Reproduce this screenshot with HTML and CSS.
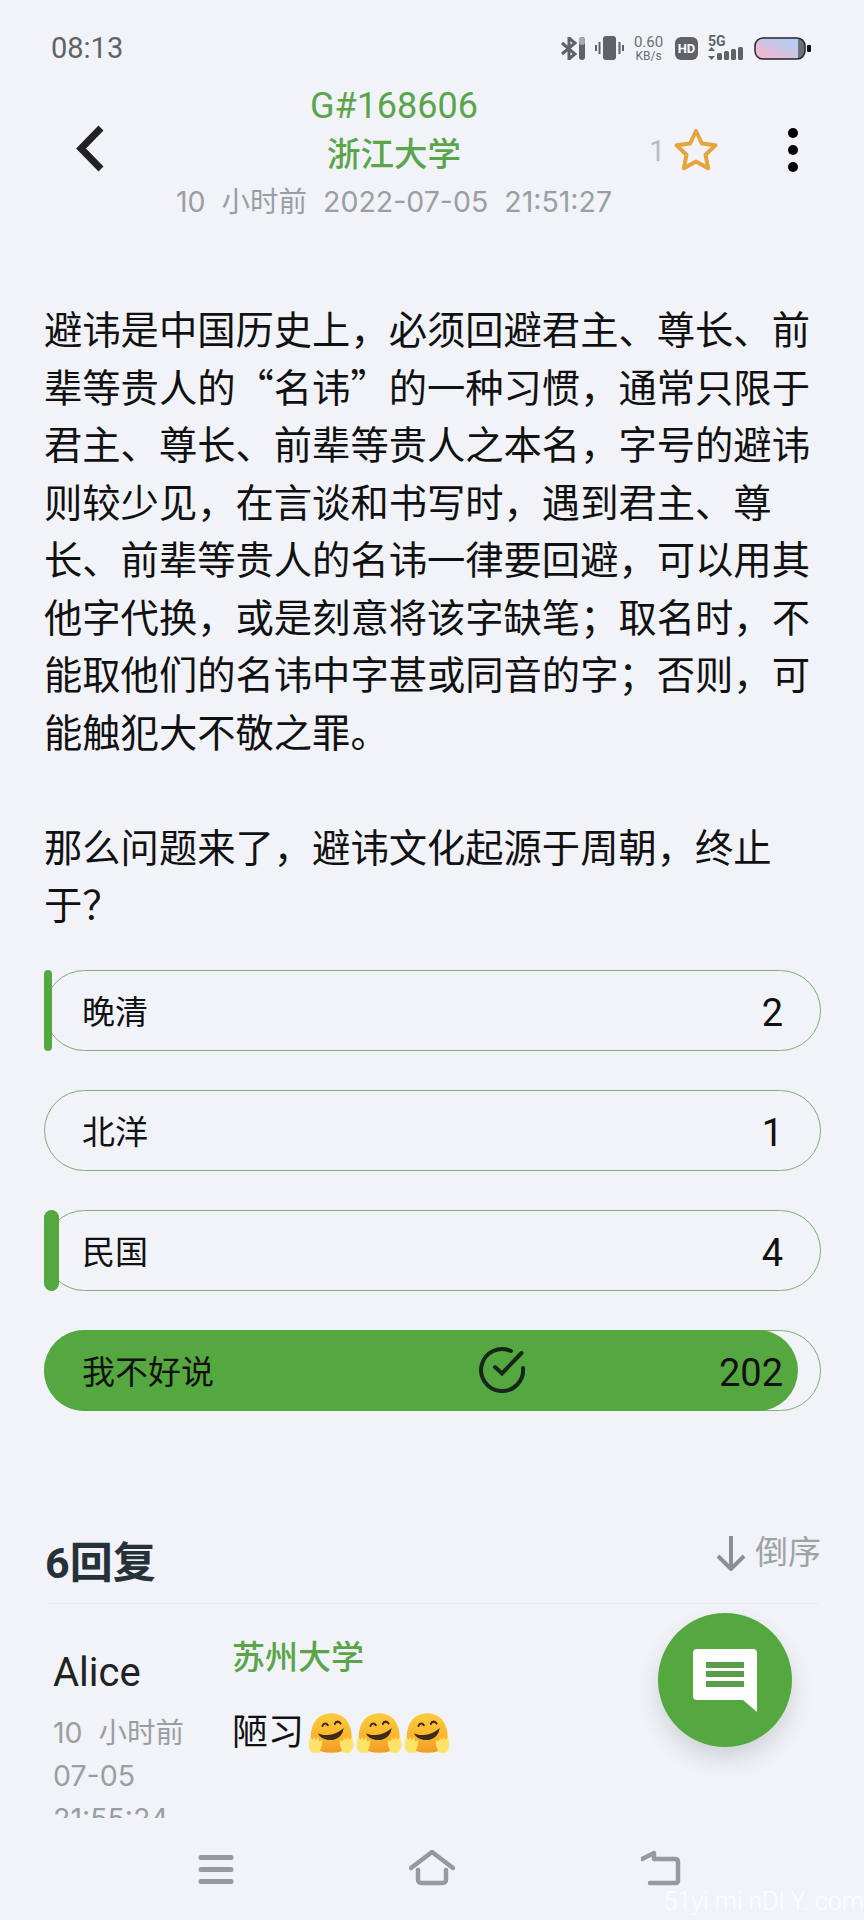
FILE: index.html
```html
<!DOCTYPE html>
<html lang="zh-CN">
<head>
  <meta charset="UTF-8" />
  <meta name="viewport" content="width=device-width, initial-scale=1.0" />
  <title>G#168606</title>
  <link rel="stylesheet" href="styles.css">
</head>
<body>
  <svg class="defs" width="0" height="0">
    <defs>
      <linearGradient id="hug-body" x1="0" y1="0" x2="0" y2="1">
        <stop offset="0" stop-color="#fccb3c" />
        <stop offset="0.6" stop-color="#f9b52e" />
        <stop offset="1" stop-color="#f29a25" />
      </linearGradient>
      <linearGradient id="batt" x1="0" y1="1" x2="1" y2="0">
        <stop offset="0.1" stop-color="#f6b6cf" />
        <stop offset="0.75" stop-color="#b4cdf0" />
      </linearGradient>
      <symbol id="hug" viewBox="0 0 137 118">
        <path d="M8 72C8 28 32 0 69 0s61 28 61 72c0 26-14 46-61 46S8 98 8 72z" fill="url(#hug-body)" />
        <path d="M43 38c3-9 12-10 16-2M80 32c3-9 13-9 17-1" fill="none" stroke="#3d2a14" stroke-width="6" stroke-linecap="round" />
        <path d="M30 60c18 10 52 6 76-16-2 24-22 38-44 36-14-1-28-8-32-20z" fill="#3d2a14" />
        <path d="M2 86l6-14 6 8 4-10 6 10 6-8 4 12 8-4 0 14-8 24H12C4 112 0 98 2 86z" fill="#fde36a" />
        <path d="M135 86l-6-14-6 8-4-10-6 10-6-8-4 12-8-4 0 14 8 24h22c8-6 12-20 10-32z" fill="#fde36a" />
      </symbol>
    </defs>
  </svg>

  <div class="status">
    <span class="clock">08:13</span>
    <div class="status-icons">
      <svg width="25" height="23" viewBox="0 0 25 23">
        <path d="M2 6l13 11-6 5V1l6 5L2 17" fill="none" stroke="#5f6368" stroke-width="3" />
        <rect x="19" y="0" width="6" height="23" rx="3" fill="#5f6368" />
        <rect x="19" y="0" width="6" height="8" rx="3" fill="#a9abae" />
      </svg>
      <svg width="29" height="24" viewBox="0 0 29 24">
        <rect x="8" y="0" width="13" height="24" rx="3" fill="#5f6368" />
        <path d="M4.500 6v12M24.500 6v12M1 9v6M28 9v6" stroke="#5f6368" stroke-width="2" />
      </svg>
      <div class="speed"><span>0.60</span><span class="speed-unit">KB/s</span></div>
      <div class="hd">HD</div>
      <div class="net">
        <span>5G</span>
        <svg width="35" height="13" viewBox="0 0 35 13">
          <path d="M0 4L3.500 0 7 4zM0 9h7l-3.500 4z" fill="#5f6368" />
          <rect x="9" y="6" width="5" height="7" rx="1.500" fill="#5f6368" />
          <rect x="16" y="4" width="5" height="9" rx="1.500" fill="#5f6368" />
          <rect x="23" y="2" width="5" height="11" rx="1.500" fill="#5f6368" />
          <rect x="30" y="0" width="5" height="13" rx="1.500" fill="#5f6368" />
        </svg>
      </div>
      <svg width="57" height="23" viewBox="0 0 57 23">
        <rect x="1" y="1" width="50" height="21" rx="8" fill="url(#batt)" />
        <path d="M45 1h-1v21h1c4 0 6-5 6-10.500S49 1 45 1z" fill="#6d7078" />
        <rect x="1" y="1" width="50" height="21" rx="8" fill="none" stroke="#23232b" stroke-width="1.500" />
        <rect x="53" y="8" width="4" height="7" rx="1" fill="#111" />
      </svg>
    </div>
  </div>

  <header class="topbar">
    <div class="back">
      <svg width="30" height="47" viewBox="0 0 30 47">
        <path d="M26 3L6 23.500 26 44" fill="none" stroke="#222" stroke-width="7" />
      </svg>
    </div>
    <div class="title">
      <div class="title-id">G#168606</div>
      <div class="title-school">浙江大学</div>
      <div class="title-time">10  小时前  2022-07-05  21:51:27</div>
    </div>
    <div class="actions">
      <span class="star-count">1</span>
      <svg class="star" width="44" height="44" viewBox="0 0 44 44">
        <path d="M22 3l5.900 12.500 13.600 1.800-10 9.400 2.600 13.500L22 33.600 9.900 40.200l2.600-13.500-10-9.400 13.600-1.800z" fill="none" stroke="#e6a43c" stroke-width="4" stroke-linejoin="round" />
      </svg>
      <div class="dots"><i></i><i></i><i></i></div>
    </div>
  </header>

  <main class="content">
    <div class="post">
      <p>避讳是中国历史上，必须回避君主、尊长、前辈等贵人的“名讳”的一种习惯，通常只限于君主、尊长、前辈等贵人之本名，字号的避讳则较少见，在言谈和书写时，遇到君主、尊长、前辈等贵人的名讳一律要回避，可以用其他字代换，或是刻意将该字缺笔；取名时，不能取他们的名讳中字甚或同音的字；否则，可能触犯大不敬之罪。</p>
      <p>那么问题来了，避讳文化起源于周朝，终止于？</p>
    </div>

    <div class="poll">
      <div class="option">
        <div class="option-fill" style="width: 1%"></div>
        <span class="option-label">晚清</span>
        <span class="option-count">2</span>
      </div>
      <div class="option">
        <span class="option-label">北洋</span>
        <span class="option-count">1</span>
      </div>
      <div class="option">
        <div class="option-fill" style="width: 1.9%"></div>
        <span class="option-label">民国</span>
        <span class="option-count">4</span>
      </div>
      <div class="option">
        <div class="option-fill" style="width: 97.3%"></div>
        <span class="option-label">我不好说</span>
        <svg class="option-check" width="48" height="48" viewBox="0 0 48 48">
          <path d="M33 5A21 21 0 1 0 45 22" fill="none" stroke="#16261a" stroke-width="4" stroke-linecap="round" />
          <path d="M17 21l7 6.500L43.500 7" fill="none" stroke="#16261a" stroke-width="4" stroke-linecap="round" />
        </svg>
        <span class="option-count">202</span>
      </div>
    </div>

    <div class="replies-head">
      <h2>6回复</h2>
      <div class="sort">
        <svg width="32" height="36" viewBox="0 0 32 36">
          <path d="M16 1v33M3 21l13 13 13-13" fill="none" stroke="#8b8f93" stroke-width="4" />
        </svg>
        <span>倒序</span>
      </div>
    </div>
    <div class="divider"></div>

    <div class="reply">
      <div class="reply-author">
        <div class="reply-name">Alice</div>
        <div class="reply-time">10  小时前</div>
        <div class="reply-time">07-05</div>
        <div class="reply-time">21:55:24</div>
      </div>
      <div class="reply-body">
        <div class="reply-school">苏州大学</div>
        <div class="reply-text">
          <span>陋习</span>
          <svg width="46" height="40"><use href="#hug" /></svg>
          <svg width="46" height="40"><use href="#hug" /></svg>
          <svg width="46" height="40"><use href="#hug" /></svg>
        </div>
      </div>
    </div>
  </main>

  <nav class="navbar">
    <svg width="36" height="36" viewBox="0 0 36 36">
      <path d="M3 7.500h30M3 19.500h30M3 31.500h30" stroke="#96999e" stroke-width="5" stroke-linecap="round" />
    </svg>
    <svg width="46" height="36" viewBox="0 0 46 36">
      <path d="M2 18L23 2l21 16" fill="none" stroke="#96999e" stroke-width="4.500" stroke-linecap="round" stroke-linejoin="round" />
      <path d="M9 20v9c0 3 1 4 4 4h20c3 0 4-1 4-4v-9" fill="none" stroke="#96999e" stroke-width="4.500" stroke-linecap="round" />
    </svg>
    <svg class="nav-back" width="40" height="36" viewBox="0 0 40 36">
      <path d="M1 9l12-6v6h21c2 0 3 1 3 3v19c0 1-1 2-2 2H9" fill="none" stroke="#96999e" stroke-width="4.500" stroke-linejoin="round" stroke-linecap="round" />
    </svg>
  </nav>

  <button class="fab">
    <svg width="64" height="63" viewBox="0 0 64 63">
      <path d="M4 0H60a4 4 0 0 1 4 4V63L50 51H4a4 4 0 0 1-4-4V4a4 4 0 0 1 4-4z" fill="#fff" />
      <path d="M13 13h38v6H13zM13 22h38v6H13zM13 32h38v6H13z" fill="#5a9e4a" />
    </svg>
  </button>

  <div class="watermark">51yi mi nDl Y. com</div>
</body>
</html>
```
FILE: styles.css
```css
* {
  box-sizing: border-box;
}
html, body {
  margin: 0;
  padding: 0;
}
body {
  position: relative;
  width: 864px;
  height: 1920px;
  overflow: hidden;
  display: flex;
  flex-direction: column;
  background: #f1f3f8;
  color: #111;
  font-family: Roboto, "Noto Sans CJK SC", sans-serif;
}
.defs {
  position: absolute;
}

/* status bar */
.status {
  flex: none;
  height: 84px;
  padding: 12px 53px 0 51px;
  display: flex;
  justify-content: space-between;
  align-items: center;
}
.clock {
  font-size: 29px;
  color: #5f6368;
}
.status-icons {
  display: flex;
  align-items: center;
  gap: 10px;
}
.speed {
  width: 29px;
  display: flex;
  flex-direction: column;
  align-items: center;
  font-size: 15px;
  line-height: 14px;
  color: #6a6e73;
}
.speed-unit {
  font-size: 12px;
  line-height: 12px;
  margin-top: 1px;
}
.hd {
  width: 23px;
  height: 23px;
  margin: 0 0 0 2px;
  border-radius: 6px;
  background: #5f6368;
  color: #fff;
  font-size: 13px;
  font-weight: 700;
  line-height: 23px;
  text-align: center;
}
.net {
  width: 35px;
  margin-right: 1px;
  display: flex;
  flex-direction: column;
  font-size: 14px;
  font-weight: 700;
  line-height: 11px;
  color: #5f6368;
}

/* header */
.topbar {
  flex: none;
  height: 137px;
  display: grid;
  grid-template-columns: 174px 440px 1fr;
}
.back {
  padding: 41px 0 0 75px;
}
.title {
  padding-top: 2px;
  text-align: center;
  color: #5aa54a;
}
.title-id {
  font-size: 36px;
  line-height: 40px;
}
.title-school {
  margin-top: 9px;
  font-size: 33.500px;
  font-weight: 500;
  line-height: 40px;
}
.title-time {
  margin-top: 7px;
  font-family: Inter, "Noto Sans CJK SC", sans-serif;
  font-size: 28.500px;
  line-height: 40px;
  color: #9a9ea3;
  white-space: pre;
}
.actions {
  padding: 44px 0 0 35px;
  display: flex;
  align-items: flex-start;
}
.star-count {
  width: 25px;
  margin-top: 6px;
  font-size: 29px;
  line-height: 34px;
  color: #b8bbbe;
}
.dots {
  margin: 0 0 0 70px;
  display: flex;
  flex-direction: column;
  gap: 7px;
}
.dots i {
  display: block;
  width: 10px;
  height: 10px;
  border-radius: 50%;
  background: #000;
}

/* scrolling part, cut off above the nav bar */
.content {
  flex: 1;
  min-height: 0;
  overflow: hidden;
  padding: 78px 43px 0 44px;
}
.post {
  font-family: "Noto Sans CJK SC", sans-serif;
  font-size: 38.300px;
  line-height: 57.500px;
}
.post p {
  margin: 0 0 57.500px;
}
.post p:last-child {
  margin-bottom: 38px;
}

.poll {
  display: flex;
  flex-direction: column;
  gap: 39px;
}
.option {
  position: relative;
  height: 81px;
  padding: 0 37px 0 37px;
  display: flex;
  align-items: center;
  border: 1px solid #7fb075;
  border-radius: 41px;
}
.option-fill {
  position: absolute;
  left: -1px;
  top: -1px;
  bottom: -1px;
  border-radius: 41px;
  background: #55a83f;
}
.option-label {
  position: relative;
  flex: 1;
  font-size: 33px;
}
.option-check {
  position: relative;
  margin-right: 193px;
}
.option-count {
  position: relative;
  margin-top: 5px;
  font-size: 38px;
}

.replies-head {
  margin-top: 118px;
  height: 74px;
  display: flex;
  justify-content: space-between;
  align-items: flex-start;
}
.replies-head h2 {
  margin: 9px 0 0 1px;
  font-size: 43px;
  font-weight: 700;
  line-height: 50px;
  color: #263238;
}
.sort {
  margin-top: 1px;
  display: flex;
  align-items: center;
  color: #9ea2a6;
  font-size: 33px;
  line-height: 46px;
}
.sort svg {
  margin-right: 8px;
}
.divider {
  height: 1px;
  margin: 0 3px 0 4px;
  background: #e6e8ed;
}

.reply {
  padding: 30px 0 0 9px;
  display: grid;
  grid-template-columns: 179px 1fr;
}
.reply-name {
  margin-top: 17px;
  font-size: 40px;
  line-height: 44px;
  color: #222;
}
.reply-time {
  font-family: Inter, "Noto Sans CJK SC", sans-serif;
  font-size: 28.500px;
  line-height: 43px;
  color: #9a9ea3;
  white-space: pre;
}
.reply-name + .reply-time {
  margin-top: 16px;
}
.reply-body {
  padding-top: 2px;
}
.reply-school {
  font-size: 33px;
  font-weight: 500;
  line-height: 44px;
  color: #5aa54a;
}
.reply-text {
  margin-top: 31px;
  display: flex;
  align-items: center;
  font-size: 36px;
  line-height: 44px;
}
.reply-text svg {
  margin-right: 2px;
}
.reply-text span {
  margin-right: 4px;
}

/* system nav */
.navbar {
  flex: none;
  height: 102px;
  padding: 32px 0 0 198px;
  display: flex;
  align-items: flex-start;
  gap: 175px;
}
.nav-back {
  margin-left: 11px;
}

/* things over the page */
.fab {
  position: absolute;
  right: 72px;
  bottom: 173px;
  width: 134px;
  height: 134px;
  padding: 0;
  border: 0;
  border-radius: 50%;
  background: #55a83f;
  box-shadow: 0 12px 22px rgba(40, 50, 60, 0.16);
  display: flex;
  align-items: center;
  justify-content: center;
}
.watermark {
  position: absolute;
  right: 0;
  bottom: 6px;
  font-size: 25px;
  font-weight: 300;
  line-height: 24px;
  white-space: nowrap;
  color: rgba(255, 255, 255, 0.85);
}
```
